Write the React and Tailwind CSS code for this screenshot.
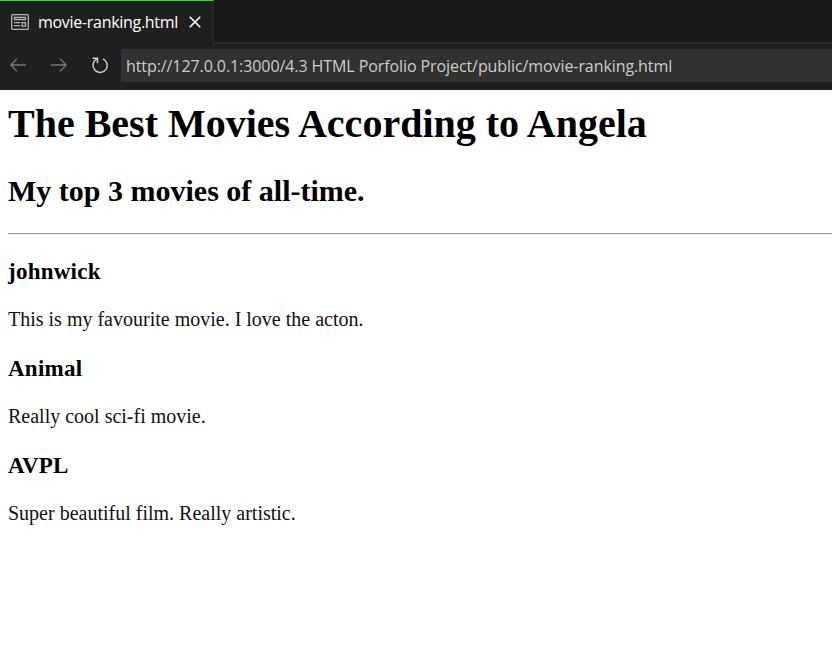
const serif = "font-['Liberation_Serif',serif]";
const movies = [
  ["johnwick", "This is my favourite movie. I love the acton."],
  ["Animal", "Really cool sci-fi movie."],
  ["AVPL", "Super beautiful film. Really artistic."],
];

function PreviewIcon() {
  return (
    <svg className="h-4 w-[18px] shrink-0" viewBox="0 0 18 16" fill="none" stroke="#b4b4b4" strokeWidth="1.3">
      <rect x="0.7" y="0.7" width="16.6" height="14.6" rx="1" />
      <path d="M3.5 3.5h11v2.2h-11zM3 8.6h6M3 11.6h6M11 8.6h3.5v3.5H11z" />
    </svg>
  );
}

export default function App() {
  return (
    <div className="flex h-[666px] w-[832px] flex-col overflow-hidden bg-white">
      <div className="flex h-11 shrink-0 bg-[#181818] font-['Open_Sans',sans-serif]">
        <div className="flex w-[214px] items-center border-t border-r border-t-[#00ff00] border-r-[#2b2b2b] bg-[#1f1f1f] pb-px pl-[11px]">
          <PreviewIcon />
          <span className="ml-[9px] w-[140px] whitespace-nowrap pb-px text-[16px] tracking-[-0.3px] text-white">movie-ranking.html</span>
          <svg className="ml-[11px] h-3 w-3" viewBox="0 0 12 12" stroke="#fff" strokeWidth="1.6"><path d="M.7.7l10.6 10.6M11.3.7L.7 11.3" /></svg>
        </div>
        <div className="grow border-b-2 border-[#2b2b2b]" />
      </div>
      <div className="flex h-[46px] shrink-0 items-center bg-[#1f1f1f] pb-[3px] pl-[10px] font-['Open_Sans',sans-serif]">
        <div className="flex items-center pb-0.5">
          <svg className="h-4 w-4" viewBox="0 0 16 16" fill="none" stroke="#777" strokeWidth="1.3"><path d="M16 8H1M7 1.8L.8 8 7 14.2" /></svg>
          <svg className="ml-[25px] h-4 w-4" viewBox="0 0 16 16" fill="none" stroke="#777" strokeWidth="1.3"><path d="M0 8h15M9 1.8L15.2 8 9 14.2" /></svg>
          <svg className="ml-6 h-[18px] w-[18px]" viewBox="0 0 18 18" fill="none" stroke="#ccc" strokeWidth="1.5"><path d="M12 2.9A7.1 7.1 0 1 1 5.6 3.2M1.5 2.2h5v5" /></svg>
        </div>
        <div className="ml-3 flex h-[33px] grow items-center bg-[#313131] pl-[5px] text-[16px] text-[#ccc]">
          <span className="whitespace-nowrap tracking-[-0.085px]">http://127.0.0.1:3000/4.3 HTML Porfolio Project/public/movie-ranking.html</span>
        </div>
      </div>
      <main className={"pl-2 text-black " + serif}>
        <h1 className="mt-[10px] text-[40px] leading-[48px] font-bold">The Best Movies According to Angela</h1>
        <h2 className="mt-[25px] text-[30px] leading-[36px] font-bold">My top 3 movies of all-time.</h2>
        <hr className="mt-6 h-[2px] border-t border-b border-t-[#9a9a9a] border-b-[#eee]" />
        {movies.map(([title, text]) => (
          <section key={title} className="h-[97px] pt-6">
            <h3 className="text-[23px] leading-[26px] font-bold tracking-[0.25px]">{title}</h3>
            <p className="mt-[23px] text-[20px] leading-[23px] text-[#111]">{text}</p>
          </section>
        ))}
      </main>
    </div>
  );
}
